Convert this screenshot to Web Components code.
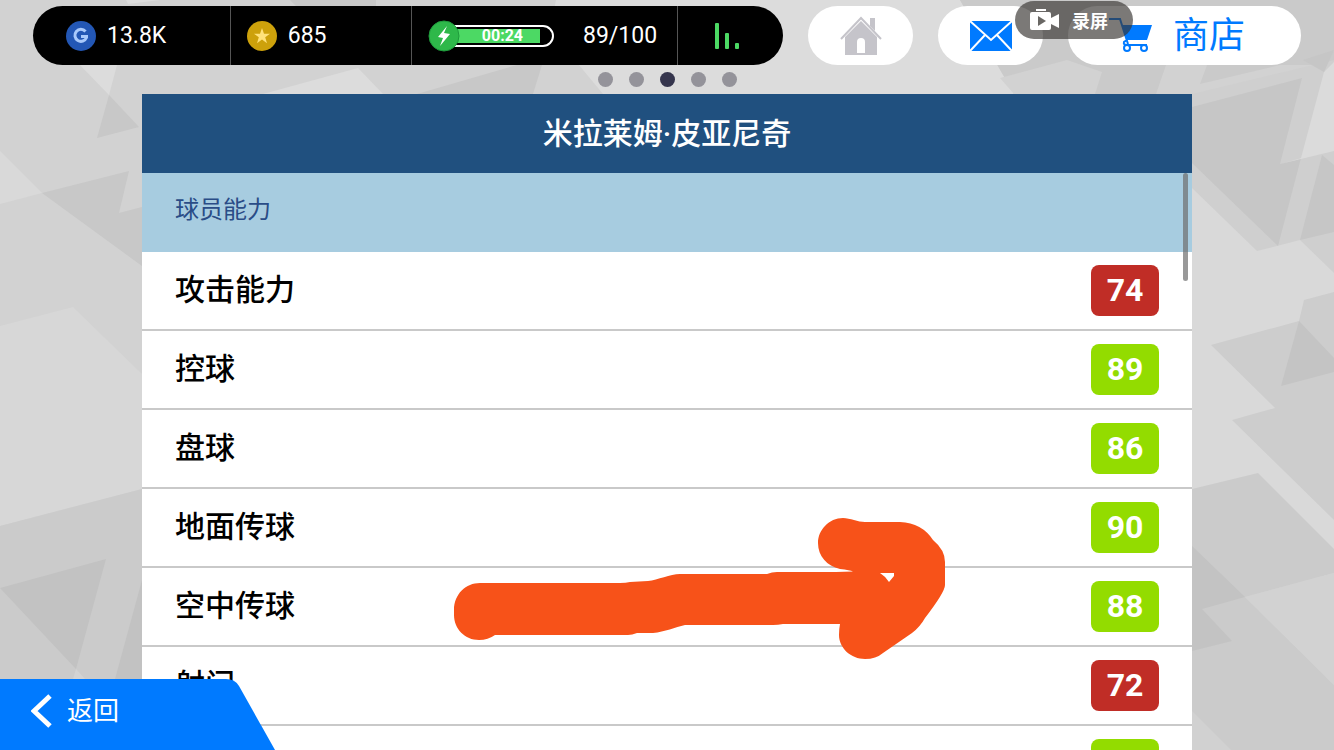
<!DOCTYPE html>
<html lang="zh-CN">
<head>
<meta charset="utf-8">
<meta name="viewport" content="width=device-width, initial-scale=1">
<title>米拉莱姆·皮亚尼奇</title>
<style>
html,
body {
  block-size: 100%;
  margin: 0;
}

body {
  background: #d1d1d1;
  font-family: Roboto, "Noto Sans CJK SC", sans-serif;
  overflow: hidden;
}
</style>
</head>
<body>
<game-screen>
  <top-bar slot="header">
    <resource-bar>
      <resource-item>
        <svg slot="icon" width="30" height="30" viewBox="0 0 30 30" aria-hidden="true">
          <circle cx="15" cy="15" r="15" fill="#2357b5" />
          <path fill="none" stroke="#a9c9fb" stroke-width="3" d="M19.500 10.500A6 6 0 1 0 20.500 16.500M22 15.500H15" />
        </svg>
        13.8K
      </resource-item>
      <resource-item>
        <svg slot="icon" width="30" height="30" viewBox="0 0 30 30" aria-hidden="true">
          <circle cx="15" cy="15" r="15" fill="#cda10b" />
          <path fill="#ffe27a" d="M15 7l2 5.700h6l-4.800 3.600 1.800 5.900-5-3.600-5 3.600 1.800-5.900L7 12.700h6z" />
        </svg>
        685
      </resource-item>
      <energy-meter time="00:24" level="90">89/100</energy-meter>
      <signal-button></signal-button>
    </resource-bar>
    <pill-button label="主页">
      <svg width="42" height="40" viewBox="0 0 42 40" aria-hidden="true">
        <path fill="none" stroke="#c5c4ca" stroke-width="2" d="M1 23 21 2 41 23" />
        <path fill="#c5c4ca" d="M30 2h5v13l-5-5z" />
        <path fill="#c5c4ca" fill-rule="evenodd" d="M21 5 37 21v18H5V21zM17 37H25V26q0-4-4-4t-4 4z" />
      </svg>
    </pill-button>
    <pill-button label="邮件">
      <svg width="44" height="32" viewBox="0 0 44 32" aria-hidden="true">
        <rect x="1" y="1" width="42" height="30" fill="#007aff" />
        <path fill="none" stroke="#fff" stroke-width="2" d="M1 1 22 20 43 1M1 31 16 15M43 31 28 15" />
      </svg>
    </pill-button>
    <pill-button wide>
      <svg width="44" height="36" viewBox="0 0 44 36" aria-hidden="true">
        <path fill="none" stroke="#007aff" stroke-width="2" d="M0 1H11L19 26M38 27H18Q14 27 15 24L18 22" />
        <path fill="#007aff" d="M13 7H43L38 22H18z" />
        <circle cx="18" cy="30" r="3" fill="#fff" stroke="#007aff" stroke-width="2" />
        <circle cx="35" cy="30" r="3" fill="#fff" stroke="#007aff" stroke-width="2" />
      </svg>
      商店
    </pill-button>
  </top-bar>
  <page-dots slot="header" count="5" current="3"></page-dots>
  <player-panel>
    <span slot="name">米拉莱姆·皮亚尼奇</span>
    <span slot="section">球员能力</span>
    <ability-table></ability-table>
  </player-panel>
  <drawn-arrow slot="overlay"></drawn-arrow>
  <record-badge slot="overlay">录屏</record-badge>
  <back-button slot="overlay">返回</back-button>
</game-screen>

<script>
function define(name, html, setup) {
  customElements.define(name, class extends HTMLElement {
    constructor() {
      super();
      this.attachShadow({ mode: "open" }).innerHTML = html;
    }

    connectedCallback() {
      if (setup) setup(this, this.shadowRoot);
    }
  });
}

define("facet-background", `<style>
:host {
  display: block;
  position: absolute;
  inset: 0;
}

svg {
  display: block;
  inline-size: 100%;
  block-size: 100%;
}
</style>
<svg viewBox="0 0 1334 750" preserveAspectRatio="xMidYMid slice" aria-hidden="true">
  <path fill="#d2d2d2" d="M0 0H1334V750H0z" />
  <g fill="#dcdcdc">
    <path d="M556 0H960L1014 94H603L550 30zM80 65H117L109 95z" />
    <path d="M126 0H160L128 4zM263 94 358 68 383 94z" />
    <path d="M0 151 42 193 0 204z" fill="#d9d9d9" />
    <path d="M0 326 73 307 142 374V489L0 526z" fill="#d7d7d7" />
  </g>
  <g fill="#c8c8c8">
    <path d="M290 0H376V10H300zM417 94 517 65H542L533 94z" />
    <path d="M109 95 139 127 97 138zM42 193 129 171 119 213 142 207V266z" />
  </g>
  <path fill="#cbcbcb" d="M0 526 142 489V750H0z" />
  <path fill="#c2c2c2" d="M0 588 106 559 76 669zM142 580 115 679H142z" />
  <path fill="#d3d3d3" d="M76 669 85 679H73z" />

  <path fill="#cacaca" d="M960 0H1334V94H1014z" />
  <path fill="#d2d2d2" d="M1000 78 1067 60 1102 72 1095 94H1014zM1156 94 1166 65H1207L1200 84 1280 65H1334V107H1192V94z" />
  <path fill="#d9d9d9" d="M1192 180H1334V573L1192 610z" />
  <path fill="#cfcfcf" d="M1192 94 1334 60V273L1300 240 1257 251 1192 188z" />
  <path fill="#c6c6c6" d="M1192 107 1302 78 1280 164 1301 158 1278 246 1192 163z" />
  <path fill="#dbdbdb" d="M1324 72 1334 62V151L1280 164 1301 158z" />
  <path fill="#c6c6c6" d="M1322 155 1334 165V232L1300 240zM1303 60 1334 50 1324 72z" />
  <path fill="#cdcdcd" d="M1211 345 1299 321 1304 300 1334 292V520L1232 420 1275 408z" />
  <path fill="#c4c4c4" d="M1299 321 1334 358V372L1281 386z" />
  <path fill="#cbcbcb" d="M1192 489 1258 473 1334 549V573L1245 597 1334 685V750H1192z" />
  <path fill="#d2d2d2" d="M1245 597 1334 573V685z" />
  <path fill="#c3c3c3" d="M1192 546 1245 597 1202 609 1232 641 1192 651z" />
  <path fill="#d1d1d1" d="M1192 711 1231 750H1192z" />
</svg>`);

define("game-screen", `<style>
:host {
  display: flex;
  flex-direction: column;
  position: relative;
  block-size: 100vh;
  overflow: hidden;
}

header {
  position: relative;
}

main {
  display: flex;
  flex: 1;
  min-block-size: 0;
  position: relative;
  padding-inline: 142px;
}
</style>
<facet-background></facet-background>
<header><slot name="header"></slot></header>
<main><slot></slot></main>
<slot name="overlay"></slot>`);

define("top-bar", `<style>
:host {
  display: flex;
  gap: 25px;
  block-size: 59px;
  padding: 6px 33px 0;
}
</style>
<slot></slot>`);

define("resource-bar", `<style>
:host {
  display: grid;
  grid-template-columns: 197fr 182fr 266fr 106fr;
  flex: 1;
  overflow: hidden;
  border-radius: 30px;
  background: #000;
  color: #fff;
  font-size: 23px;
}

::slotted(:not(:first-child)) {
  border-inline-start: 1px solid #555;
}

::slotted(:first-child) {
  padding-inline-start: 33px;
}
</style>
<slot></slot>`);

define("resource-item", `<style>
:host {
  display: flex;
  align-items: center;
  gap: 11px;
  padding-inline-start: 16px;
}

::slotted(svg) {
  display: block;
}
</style>
<slot name="icon"></slot>
<span><slot></slot></span>`);

define("energy-meter", `<style>
:host {
  display: flex;
  align-items: center;
  justify-content: space-between;
  padding-inline: 16px 20px;
}

.meter {
  display: flex;
  align-items: center;
}

svg {
  position: relative;
  z-index: 1;
}

.track {
  box-sizing: border-box;
  inline-size: 110px;
  block-size: 22px;
  margin-inline-start: -16px;
  padding: 2px;
  border: 2px solid #fff;
  border-radius: 11px;
}

.fill {
  block-size: 14px;
  padding-inline-start: 16px;
  box-sizing: border-box;
  background: #4cd964;
  font-size: 16px;
  font-weight: 700;
  line-height: 14px;
  text-align: center;
}
</style>
<div class="meter">
  <svg width="32" height="32" viewBox="0 0 32 32" aria-hidden="true">
    <circle cx="16" cy="16" r="15" fill="#2eb84a" stroke="#1f9a3c" />
    <path fill="#fff" d="M19 6 10 17 15 18 12 26 22 14 16 13z" />
  </svg>
  <div class="track"><div class="fill"></div></div>
</div>
<span><slot></slot></span>`, (host, root) => {
  const fill = root.querySelector(".fill");
  fill.textContent = host.getAttribute("time");
  fill.style.inlineSize = `${host.getAttribute("level")}%`;
});

define("signal-button", `<style>
:host {
  display: grid;
}

button {
  display: grid;
  place-items: center;
  padding: 0 8px 0 0;
  border: 0;
  background: none;
}
</style>
<button type="button" aria-label="网络状态">
  <svg width="26" height="26" viewBox="0 0 26 26" fill="#4cd964" aria-hidden="true">
    <rect x="1" width="4" height="26" rx="1" />
    <rect x="11" y="10" width="4" height="16" rx="1" />
    <rect x="21" y="20" width="4" height="6" rx="1" />
  </svg>
</button>`);

define("pill-button", `<style>
:host {
  display: grid;
  inline-size: 105px;
}

:host([wide]) {
  inline-size: 233px;
}

button {
  display: flex;
  align-items: center;
  justify-content: center;
  gap: 20px;
  padding: 0;
  border: 0;
  border-radius: 30px;
  background: #fff;
  color: #007aff;
  font: 36px/1 Roboto, "Noto Sans CJK SC", sans-serif;
}

:host([wide]) button {
  justify-content: flex-end;
  padding-inline-end: 56px;
}
</style>
<button type="button"><slot></slot></button>`, (host, root) => {
  if (host.hasAttribute("label")) {
    root.querySelector("button").setAttribute("aria-label", host.getAttribute("label"));
  }
});

define("page-dots", `<style>
:host {
  display: flex;
  align-items: center;
  justify-content: center;
  gap: 16px;
  block-size: 29px;
}

button {
  inline-size: 15px;
  block-size: 15px;
  padding: 0;
  border: 0;
  border-radius: 50%;
  background: #94939a;
}

button[aria-current] {
  background: #35354d;
}
</style>`, (host, root) => {
  const current = Number(host.getAttribute("current"));
  for (let i = 1; i <= Number(host.getAttribute("count")); i++) {
    const dot = document.createElement("button");
    dot.type = "button";
    dot.setAttribute("aria-label", `第${i}页`);
    if (i === current) dot.setAttribute("aria-current", "page");
    root.append(dot);
  }
});

define("player-panel", `<style>
:host {
  display: flex;
  flex: 1;
  flex-direction: column;
  min-inline-size: 0;
  background: #fff;
}

h1,
h2 {
  margin: 0;
  font-weight: 500;
  line-height: 79px;
}

h1 {
  background: #20507f;
  color: #fff;
  font-size: 30px;
  text-align: center;
}

h2 {
  padding-inline: 33px;
  background: #a7cce0;
  color: #2a4c87;
  font-size: 24px;
  font-weight: 400;
  line-height: 75px;
  padding-block-end: 4px;
}

.body {
  flex: 1;
  min-block-size: 0;
  position: relative;
}

.scroll {
  block-size: 100%;
  overflow-y: auto;
  scrollbar-width: none;
}

.thumb {
  position: absolute;
  inset-block-start: 0;
  inset-inline-end: 4px;
  inline-size: 5px;
  block-size: 108px;
  border-radius: 3px;
  background: rgb(110 110 110 / 0.7);
}
</style>
<h1><slot name="name"></slot></h1>
<div class="body">
  <div class="scroll">
    <h2><slot name="section"></slot></h2>
    <slot></slot>
  </div>
  <div class="thumb"></div>
</div>`);

const abilities = [
  ["攻击能力", 74],
  ["控球", 89],
  ["盘球", 86],
  ["地面传球", 90],
  ["空中传球", 88],
  ["射门", 72],
];

define("ability-table", `<style>
:host {
  display: block;
}

table {
  inline-size: 100%;
  border-spacing: 0;
}

th,
td {
  box-sizing: border-box;
  block-size: 79px;
  padding: 0 33px;
  border-block-end: 2px solid #c9c9c9;
}

th {
  padding-block-end: 2px;
  color: #000;
  font-size: 30px;
  font-weight: 500;
  line-height: 40px;
  text-align: start;
}

td {
  inline-size: 68px;
}

span {
  display: block;
  inline-size: 68px;
  block-size: 51px;
  border-radius: 8px;
  background: #c02d26;
  color: #fff;
  font-size: 32px;
  font-weight: 700;
  line-height: 51px;
  text-align: center;
}

.high {
  background: #93dc00;
}
</style>
<table><tbody></tbody></table>`, (host, root) => {
  const rows = abilities.map(([name, value]) => `<tr>
    <th scope="row">${name}</th>
    <td><span class="${value >= 80 ? "high" : "low"}">${value}</span></td>
  </tr>`);
  rows.push(`<tr><th></th><td><span class="high"></span></td></tr>`);
  root.querySelector("tbody").innerHTML = rows.join("");
});

define("drawn-arrow", `<style>
:host {
  display: block;
  position: absolute;
  inset-block-start: 518px;
  inset-inline-start: 454px;
  pointer-events: none;
}

svg {
  display: block;
}
</style>
<svg width="492" height="142" viewBox="454 518 492 142" aria-hidden="true">
  <path fill="#f75219" d="M454 610C454 594 466 583 480 583H620Q626 583 630 582L648 581C658 580 670 574 680 574H767Q772 572 777 572H836L853 571.500Q850 570 840 569C827 566 818 556 818 543C818 530 829 518 843 518C850 518 858 522 865 522H900Q922 523 933 540Q945 550 945 562V585Q945 592 925 618Q920 627 912 633L883 653Q876 659 865 659C851 659 839 648 839 635Q839 629 840 624H783Q778 625 773 625H685C675 627 665 632 653 633H637Q632 635 628 635H495Q488 640 479 640C465 640 454 629 454 615z" />
  <path fill="#fff" d="M880 573H894V576L889 582Q885 576 880 573z" />
</svg>`);

define("record-badge", `<style>
:host {
  display: flex;
  align-items: center;
  gap: 12px;
  position: absolute;
  inset-block-start: 1px;
  inset-inline-end: 201px;
  box-sizing: border-box;
  inline-size: 118px;
  block-size: 38px;
  padding-inline-start: 15px;
  border-radius: 19px;
  background: rgb(55 52 48 / 0.66);
  color: #fff;
  font-size: 18px;
  font-weight: 700;
}
</style>
<svg width="30" height="22" viewBox="0 0 30 22" aria-hidden="true">
  <path fill="#fff" d="M6 0H16V2H6zM2 3H19Q21 3 21 5V9L29 5V19L21 15V19Q21 21 19 21H2Q0 21 0 19V5Q0 3 2 3z" />
  <path fill="#696764" d="M8 7 16 12 8 17z" />
</svg>
<span><slot></slot></span>`);

define("back-button", `<style>
:host {
  display: block;
  position: absolute;
  inset-block-end: 0;
  inset-inline-start: 0;
}

button {
  display: flex;
  align-items: center;
  gap: 15px;
  inline-size: 275px;
  block-size: 71px;
  padding: 0 0 8px 31px;
  border: 0;
  background: #007aff;
  clip-path: path("M0 0H226Q235 0 239 7L275 71H0z");
  color: #fff;
  font: 26px/1 Roboto, "Noto Sans CJK SC", sans-serif;
}
</style>
<button type="button">
  <svg width="21" height="34" viewBox="0 0 21 34" aria-hidden="true">
    <path fill="none" stroke="#fff" stroke-width="5" d="M19 2 3 17 19 32" />
  </svg>
  <slot></slot>
</button>`);
</script>
</body>
</html>
